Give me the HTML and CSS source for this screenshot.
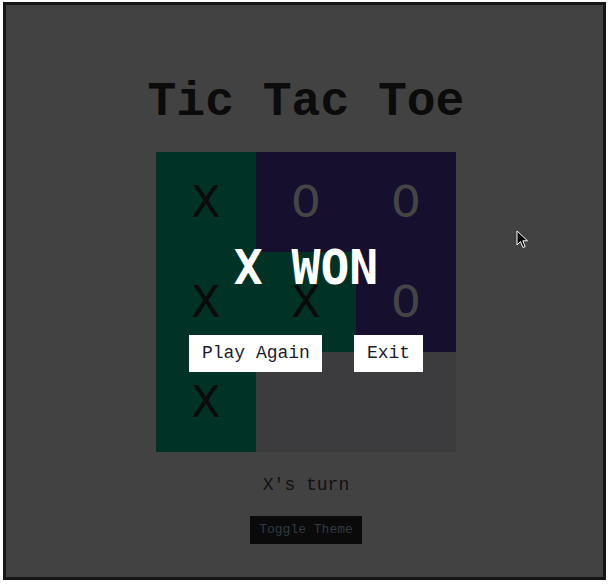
FILE: index.html
```html
<!DOCTYPE html>
<html>
<head>
<meta charset="utf-8">
<link rel="stylesheet" href="styles.css">
</head>
<body>
<div class="frame">
  <h1 class="title">Tic Tac Toe</h1>
  <div class="board-wrap">
    <div class="board">
      <div class="cell win">X</div>
      <div class="cell o">O</div>
      <div class="cell o">O</div>
      <div class="cell win">X</div>
      <div class="cell win">X</div>
      <div class="cell o">O</div>
      <div class="cell win">X</div>
      <div class="cell empty"></div>
      <div class="cell empty"></div>
    </div>
    <div class="overlay">
      <h2 class="result">X WON</h2>
      <div class="actions">
        <button class="btn">Play Again</button>
        <button class="btn">Exit</button>
      </div>
    </div>
  </div>
  <p class="turn">X's turn</p>
  <button class="toggle">Toggle Theme</button>
  <svg class="cursor" width="14" height="20" viewBox="0 0 14 20"><path d="M1 1 L1 15 L4.5 11.5 L7 17.5 L9.2 16.6 L6.8 10.8 L11.5 10.8 Z" fill="#000" stroke="#fff" stroke-width="1"/></svg>
</div>
</body>
</html>
```
FILE: styles.css
```css
* { box-sizing: border-box; }
html, body { margin: 0; padding: 0; background: #fff; }
body { font-family: "Liberation Mono", monospace; }
.frame {
  position: relative;
  margin: 2px 6px 7px 3px;
  height: 578px;
  border: 3px solid #161616;
  background: #424242;
  display: flex;
  flex-direction: column;
  align-items: center;
  padding-top: 69px;
  padding-left: 3px;
}
.title {
  margin: 0;
  font-size: 48px;
  line-height: 56px;
  font-weight: bold;
  color: #0b0b0b;
}
.board-wrap {
  position: relative;
  margin-top: 22px;
  width: 300px;
  height: 300px;
}
.board {
  display: grid;
  grid-template-columns: repeat(3, 100px);
  grid-template-rows: repeat(3, 100px);
}
.cell {
  display: flex;
  align-items: center;
  justify-content: center;
  padding-top: 4px;
  font-size: 48px;
  color: #0a0a0a;
}
.cell.win { background: #013226; }
.cell.o { background: #160f2e; color: #454545; }
.cell.empty { background: #3c3c3e; }
.overlay {
  position: absolute;
  inset: 0;
  display: flex;
  flex-direction: column;
  align-items: center;
  padding-top: 87px;
}
.result {
  margin: 0;
  font-family: "DejaVu Sans Mono", monospace;
  font-size: 48px;
  line-height: 56px;
  font-weight: bold;
  color: #fff;
}
.actions {
  display: flex;
  gap: 32px;
  margin-top: 40px;
}
.btn {
  font-family: "Liberation Mono", monospace;
  font-size: 18px;
  line-height: 21px;
  padding: 8px 12.5px;
  border: none;
  background: #fff;
  color: #1b1b2b;
}
.turn {
  margin: 22px 0 0;
  font-size: 18px;
  line-height: 22px;
  color: #111;
}
.toggle {
  margin-top: 20px;
  font-family: "Liberation Mono", monospace;
  font-size: 13px;
  line-height: 16px;
  padding: 6px 9.5px;
  border: none;
  background: #0a0a0a;
  color: #343b42;
}
.cursor {
  position: absolute;
  left: 510px;
  top: 225px;
}
```
